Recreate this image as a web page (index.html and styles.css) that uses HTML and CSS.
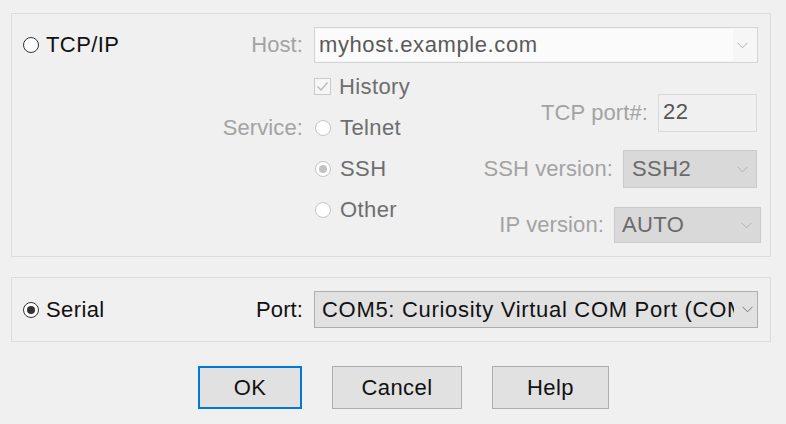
FILE: index.html
```html
<!DOCTYPE html>
<html>
<head>
<meta charset="utf-8">
<link rel="stylesheet" href="styles.css">
</head>
<body>
<div class="dialog">
  <div class="group group-tcp">
    <div class="lead">
      <span class="choice"><span class="radio"></span><span class="txt">TCP/IP</span></span>
      <span class="lbl dis">Host:</span>
    </div>
    <div class="combo combo-host">
      <span class="combo-field">myhost.example.com</span>
      <svg class="chev" width="11" height="7" viewBox="0 0 11 7"><polyline points="0.5,0.8 5.5,5.8 10.5,0.8" fill="none" stroke="#b4b4b4" stroke-width="1"/></svg>
    </div>
    <div class="service-cell"><span class="lbl dis">Service:</span></div>
    <div class="lower">
      <div class="options">
        <div class="opt">
          <span class="check"><svg width="15" height="15" viewBox="0 0 15 15"><polyline points="2.5,7.5 6,11 12.5,3.5" fill="none" stroke="#b8b8b8" stroke-width="1.3"/></svg></span>
          <span class="opt-txt">History</span>
        </div>
        <div class="opt"><span class="radio dis"></span><span class="opt-txt">Telnet</span></div>
        <div class="opt"><span class="radio dis on"></span><span class="opt-txt">SSH</span></div>
        <div class="opt"><span class="radio dis"></span><span class="opt-txt">Other</span></div>
      </div>
      <div class="fields">
        <div class="field f-port">
          <span class="lbl dis">TCP port#:</span>
          <span class="edit">22</span>
        </div>
        <div class="field f-ssh">
          <span class="lbl dis">SSH version:</span>
          <span class="combo combo-dis w-ssh">
            <span class="combo-val">SSH2</span>
            <svg class="chev" width="11" height="7" viewBox="0 0 11 7"><polyline points="0.5,0.8 5.5,5.8 10.5,0.8" fill="none" stroke="#b0b0b0" stroke-width="1"/></svg>
          </span>
        </div>
        <div class="field f-ip">
          <span class="lbl dis">IP version:</span>
          <span class="combo combo-dis w-ip">
            <span class="combo-val">AUTO</span>
            <svg class="chev" width="11" height="7" viewBox="0 0 11 7"><polyline points="0.5,0.8 5.5,5.8 10.5,0.8" fill="none" stroke="#b0b0b0" stroke-width="1"/></svg>
          </span>
        </div>
      </div>
    </div>
  </div>

  <div class="group group-serial">
    <div class="lead">
      <span class="choice"><span class="radio on"></span><span class="txt">Serial</span></span>
      <span class="lbl">Port:</span>
    </div>
    <div class="combo combo-com">
      <span class="combo-text">COM5: Curiosity Virtual COM Port (COM5)</span>
      <svg class="chev" width="11" height="7" viewBox="0 0 11 7"><polyline points="0.5,0.8 5.5,5.8 10.5,0.8" fill="none" stroke="#777" stroke-width="1"/></svg>
    </div>
  </div>

  <div class="buttons">
    <button class="btn btn-default w-ok">OK</button>
    <button class="btn w-cancel">Cancel</button>
    <button class="btn w-help">Help</button>
  </div>
</div>
</body>
</html>
```

FILE: styles.css
```css
html, body {
  margin: 0;
  padding: 0;
  background: #f0f0f0;
}
body {
  font-family: "Liberation Sans", Arial, sans-serif;
  font-size: 22px;
  letter-spacing: 0.4px;
  color: #111;
}
.dialog {
  padding: 13px 0 0 11px;
  width: 760px;
}
.group {
  box-sizing: border-box;
  width: 760px;
  border: 1px solid #dcdcdc;
  display: grid;
  grid-template-columns: 291px 444px;
  column-gap: 11px;
  row-gap: 3px;
  padding: 13px 12px 13px 0;
}
.group-serial {
  margin-top: 20px;
}
.lead {
  display: flex;
  align-items: center;
  justify-content: space-between;
  padding-left: 11px;
}
.choice {
  display: flex;
  align-items: center;
  gap: 7px;
  color: #111;
}
.lbl {
  color: #111;
  white-space: nowrap;
  letter-spacing: 0.1px;
}
.lbl.dis {
  color: #a3a3a3;
}
.radio {
  box-sizing: border-box;
  width: 16px;
  height: 16px;
  border-radius: 50%;
  border: 1px solid #333;
  background: #fff;
  display: flex;
  align-items: center;
  justify-content: center;
  flex: none;
}
.radio.on::after {
  content: "";
  width: 8px;
  height: 8px;
  border-radius: 50%;
  background: #333;
}
.radio.dis {
  border-color: #c4c4c4;
}
.radio.dis.on::after {
  background: #c2c2c2;
}

/* combos */
.combo {
  box-sizing: border-box;
  display: flex;
  align-items: center;
  height: 36px;
}
.chev {
  flex: none;
  margin-left: auto;
  margin-right: 8px;
}
.combo-host {
  border: 1px solid #d4d4d4;
  background: #f6f6f6;
  padding: 1px 0 1px 1px;
}
.combo-field {
  box-sizing: border-box;
  width: 417px;
  height: 100%;
  background: #fbfbfb;
  color: #5a5a5a;
  padding-left: 3px;
  display: flex;
  align-items: center;
  letter-spacing: 0.6px;
}
.combo-host .chev {
  margin-right: 9px;
}

.service-cell {
  display: flex;
  justify-content: flex-end;
  padding-top: 41px;
  line-height: 41px;
  height: 41px;
}

.lower {
  display: flex;
}
.options {
  flex: none;
  display: flex;
  flex-direction: column;
}
.opt {
  height: 41px;
  display: flex;
  align-items: center;
}
.opt-txt {
  color: #6e6e6e;
}
.check {
  box-sizing: border-box;
  width: 17px;
  height: 17px;
  border: 1px solid #cacaca;
  background: #f6f6f6;
  margin-right: 8px;
  margin-top: -1px;
  display: flex;
  align-items: center;
  justify-content: center;
}
.opt .radio {
  margin-left: 1px;
  margin-right: 9px;
}

.fields {
  flex: 1;
  display: flex;
  flex-direction: column;
  align-items: flex-end;
  padding-top: 28px;
}
.field {
  display: flex;
  align-items: center;
  gap: 10px;
}
.edit {
  box-sizing: border-box;
  width: 99px;
  height: 38px;
  border: 1px solid #d9d9d9;
  background: #f0f0f0;
  color: #555;
  padding: 4px 0 0 4px;
}
.f-port {
  margin-right: 1px;
}
.f-ssh {
  margin-top: 18px;
  margin-right: 1px;
}
.f-ip {
  margin-top: 19px;
  margin-right: -3px;
}
.combo-dis {
  background: #d9d9d9;
  border: 1px solid #cbcbcb;
  color: #6a6a6a;
}
.w-ssh {
  width: 134px;
  height: 38px;
  padding-left: 8px;
}
.w-ip {
  width: 147px;
  height: 36px;
  padding-left: 7px;
}

.combo-com {
  height: 37px;
  border: 1px solid #adadad;
  background: #e1e1e1;
  padding-left: 7px;
}
.combo-text {
  flex: none;
  width: 412px;
  overflow: hidden;
  white-space: nowrap;
  color: #111;
  letter-spacing: 0.7px;
}
.combo-com .chev {
  margin-left: 8px;
  margin-right: 4px;
}

.buttons {
  display: flex;
  gap: 30px;
  margin-top: 24px;
  padding-left: 187px;
}
.btn {
  box-sizing: border-box;
  height: 43px;
  background: #e1e1e1;
  border: 1px solid #adadad;
  font-family: "Liberation Sans", Arial, sans-serif;
  font-size: 22px;
  letter-spacing: 0.4px;
  color: #111;
  padding: 0;
  margin: 0;
}
.btn-default {
  border: 2px solid #0078d7;
}
.w-ok { width: 104px; }
.w-cancel { width: 130px; }
.w-help { width: 117px; }
```
